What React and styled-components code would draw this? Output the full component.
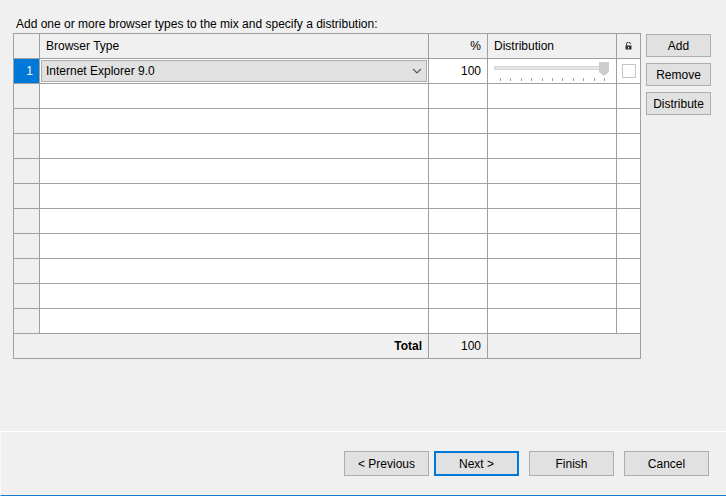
import styled, { createGlobalStyle } from 'styled-components';

const GlobalStyle = createGlobalStyle`
  html, body {
    margin: 0;
    padding: 0;
    background: #f0f0f0;
  }
  body {
    font-family: 'Liberation Sans', Arial, sans-serif;
    font-size: 12px;
    color: #000;
  }
`;

const Window = styled.div`
  width: 726px;
  height: 496px;
  display: flex;
  flex-direction: column;
  background: #f0f0f0;
  overflow: hidden;
`;

const Content = styled.div`
  height: 432px;
  padding: 16px 0 0 13px;
  box-sizing: border-box;
  border-bottom: 1px solid #ffffff;
`;

const Intro = styled.div`
  height: 17px;
  line-height: 16px;
  padding-left: 3px;
`;

const Body = styled.div`
  display: flex;
  gap: 5px;
  align-items: flex-start;
`;

const Grid = styled.div`
  display: grid;
  grid-template-columns: 25px 388px 58px 128px 23px;
  grid-auto-rows: 24px;
  gap: 1px;
  background: #a0a0a0;
  border: 1px solid #a0a0a0;
`;

const Cell = styled.div`
  background: ${(p) => (p.$gray ? '#f0f0f0' : '#ffffff')};
  display: flex;
  align-items: center;
  justify-content: ${(p) => (p.$center ? 'center' : p.$right ? 'flex-end' : 'flex-start')};
  padding: 0 ${(p) => (p.$center ? '0' : '6px')};
  font-weight: ${(p) => (p.$bold ? 'bold' : 'normal')};
  grid-column: ${(p) => p.$span || 'auto'};
  white-space: nowrap;
  overflow: hidden;
`;

const RowHead = styled.div`
  background: ${(p) => (p.$selected ? '#0078d7' : '#f0f0f0')};
  color: #fff;
  display: flex;
  align-items: center;
  justify-content: flex-end;
  padding-right: 6px;
`;

const ComboCell = styled.div`
  background: #fff;
  padding: 1px;
  display: flex;
`;

const Combo = styled.div`
  flex: 1;
  display: flex;
  align-items: center;
  justify-content: space-between;
  background: #e1e1e1;
  border: 1px solid #adadad;
  padding: 0 4px;
`;

const SliderCell = styled.div`
  background: #fff;
  display: flex;
  align-items: center;
  padding-left: 5px;
`;

const CheckCell = styled.div`
  background: #fff;
  display: flex;
  align-items: center;
  padding-left: 5px;
`;

const Check = styled.div`
  width: 12px;
  height: 12px;
  border: 1px solid #c4c4c4;
  background: #fff;
`;

const SideButtons = styled.div`
  display: flex;
  flex-direction: column;
  gap: 6px;
  padding-top: 1px;
`;

const Button = styled.button`
  width: ${(p) => p.$w || 65}px;
  height: ${(p) => p.$h || 23}px;
  background: #e1e1e1;
  border: ${(p) => (p.$focus ? '2px solid #0078d7' : '1px solid #adadad')};
  font-family: inherit;
  font-size: 12px;
  color: #000;
  padding: 0;
  margin: 0;
  box-sizing: border-box;
`;

const Footer = styled.div`
  flex: 1;
  display: flex;
  justify-content: flex-end;
  align-items: flex-start;
  padding: 19px 17px 0 0;
  border-left: 1px solid #fafafa;
  border-bottom: 1px solid #1a7ac9;
`;

const FooterButtons = styled.div`
  display: flex;
  gap: 10px;
`;

const NavPair = styled.div`
  display: flex;
  gap: 5px;
`;

const Chevron = () => (
  <svg width="10" height="6" viewBox="0 0 10 6">
    <path d="M1 1 L5 5 L9 1" fill="none" stroke="#5a5a5a" strokeWidth="1.2" />
  </svg>
);

const Lock = () => (
  <svg width="7" height="8" viewBox="0 0 7 8">
    <path d="M1.5 3.5 V2 A2 2 0 0 1 5.5 2" fill="none" stroke="#333" strokeWidth="1" />
    <rect x="0.5" y="3.5" width="6" height="4" fill="#333" />
    <rect x="3" y="5" width="1" height="1.5" fill="#fff" />
  </svg>
);

const Slider = () => {
  const ticks = Array.from({ length: 11 }, (_, i) => Math.round(7 + i * 10.4));
  return (
    <svg width="122" height="20" viewBox="0 0 122 20">
      <rect x="1.5" y="5.5" width="110" height="3" fill="#e7e7e7" stroke="#d6d6d6" />
      {ticks.map((x) => (
        <rect key={x} x={x} y="17" width="1" height="3" fill="#a0a0a0" />
      ))}
      <path d="M106 1 H116 V11 L111 15 L106 11 Z" fill="#cdcdcd" />
    </svg>
  );
};

const emptyRows = Array.from({ length: 10 });

const App = () => {
  return (
    <Window>
      <GlobalStyle />
      <Content>
        <Intro>Add one or more browser types to the mix and specify a distribution:</Intro>
        <Body>
          <Grid>
            <Cell $gray />
            <Cell $gray>Browser Type</Cell>
            <Cell $gray $right>%</Cell>
            <Cell $gray>Distribution</Cell>
            <Cell $gray $center>
              <Lock />
            </Cell>

            <RowHead $selected>1</RowHead>
            <ComboCell>
              <Combo>
                <span>Internet Explorer 9.0</span>
                <Chevron />
              </Combo>
            </ComboCell>
            <Cell $right>100</Cell>
            <SliderCell>
              <Slider />
            </SliderCell>
            <CheckCell>
              <Check />
            </CheckCell>

            {emptyRows.map((_, i) => [
              <RowHead key={`h${i}`} />,
              <Cell key={`b${i}`} />,
              <Cell key={`p${i}`} />,
              <Cell key={`d${i}`} />,
              <Cell key={`l${i}`} />,
            ])}

            <Cell $gray $right $bold $span="span 2">Total</Cell>
            <Cell $gray $right>100</Cell>
            <Cell $gray $span="span 2" />
          </Grid>
          <SideButtons>
            <Button>Add</Button>
            <Button>Remove</Button>
            <Button>Distribute</Button>
          </SideButtons>
        </Body>
      </Content>
      <Footer>
        <FooterButtons>
          <NavPair>
            <Button $w={85} $h={25}>&lt; Previous</Button>
            <Button $w={85} $h={25} $focus>Next &gt;</Button>
          </NavPair>
          <Button $w={85} $h={25}>Finish</Button>
          <Button $w={85} $h={25}>Cancel</Button>
        </FooterButtons>
      </Footer>
    </Window>
  );
};

export default App;
